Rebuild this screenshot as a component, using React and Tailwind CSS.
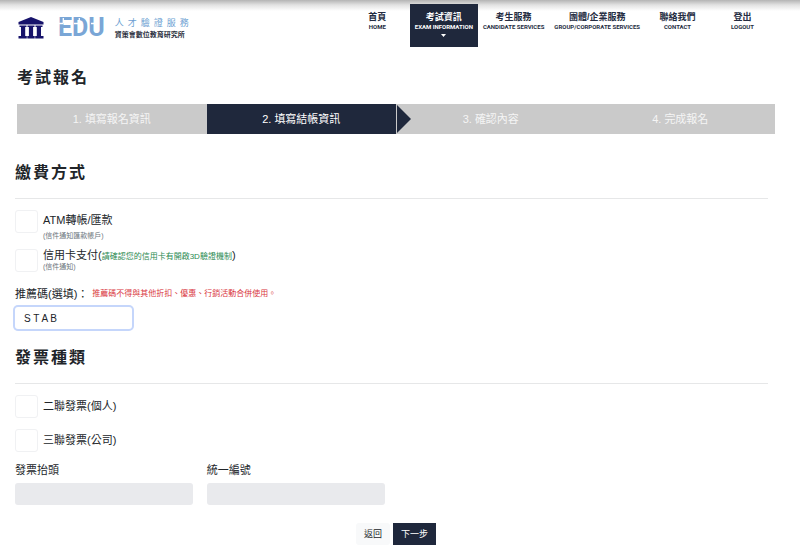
import React, { useState } from 'react';

const navItems = [
  { title: '首頁', sub: 'HOME' },
  { title: '考試資訊', sub: 'EXAM INFORMATION', active: true },
  { title: '考生服務', sub: 'CANDIDATE SERVICES' },
  { title: '團體/企業服務', sub: 'GROUP/CORPORATE SERVICES' },
  { title: '聯絡我們', sub: 'CONTACT' },
  { title: '登出', sub: 'LOGOUT' },
];

const steps = ['填寫報名資訊', '填寫結帳資訊', '確認內容', '完成報名'];
const currentStep = 1;

const radioClass =
  'size-[23px] shrink-0 appearance-none rounded-[3px] border border-[#f0f1f3] bg-white checked:border-[#1f283c] checked:bg-[#1f283c]';

const Logo = () => (
  <a href="#" className="flex items-center pt-3 pl-[18px]">
    {/* Institute mark: pediment on three columns */}
    <svg width="26" height="22" viewBox="0 0 26 22" fill="#17136b" aria-hidden="true">
      <path d="M13 0 25.5 5v2.500H.5V5z" />
      <path d="M1.500 8.500h7v1.500H7.200v9h1.600v2.500H.5V19H3v-9H1.500zM9.500 8.500h7v1.500h-1.400v9h1.600v2.500H9.300V19h1.600v-9H9.500zM17.500 8.500h7v1.500H23v9h2.500v2.500h-8.300V19h1.600v-9h-1.300z" />
    </svg>
    <span className="relative ml-[14px] font-['Roboto',sans-serif] text-[25px] leading-6 font-bold text-[#7aa6d6]">
      EDU
      {/* cuts that leave a dot at the top left of every letter */}
      <svg className="absolute inset-0" width="48" height="24" viewBox="0 0 48 24" aria-hidden="true">
        <path d="M0 7.500h5M16 7.500h5M33 7.500h5" stroke="#fff" strokeWidth="1.300" />
        <path d="M5.300 2v5.500M21.300 2v5.500" stroke="#fff" strokeWidth="1.300" />
      </svg>
    </span>
    <span className="ml-[10px] flex flex-col">
      <span className="text-[9px] leading-3 tracking-[4px] text-[#6d9fd2]">人才驗證服務</span>
      <span className="text-[7px] leading-[11px] font-bold text-[#2b3040]">資策會數位教育研究所</span>
    </span>
  </a>
);

const Header = () => (
  <header className="flex items-start justify-between bg-[linear-gradient(to_bottom,#b4b4b4_0px,#e2e2e2_5px,#fff_11px)] pt-1 pr-[25px]">
    <Logo />
    <nav className="flex text-center">
      {navItems.map((item) => (
        <a
          key={item.sub}
          href="#"
          className={`flex h-[43px] min-w-[65px] flex-col items-center px-[5px] pt-[7px] font-bold whitespace-nowrap ${
            item.active ? 'bg-[#1f283c] text-white' : 'text-[#252d42]'
          }`}
        >
          <span className="text-[9px] leading-3">{item.title}</span>
          <span className="font-['Roboto',sans-serif] text-[6px] leading-[7px]">{item.sub}</span>
          {item.active && (
            <svg className="mt-1" width="5" height="3" viewBox="0 0 5 3" fill="#fff" aria-hidden="true">
              <path d="M0 0h5L2.500 3z" />
            </svg>
          )}
        </a>
      ))}
    </nav>
  </header>
);

const Steps = () => (
  <ol className="mt-[14px] mr-[25px] ml-[17px] grid grid-cols-4 bg-[#cacaca] text-center text-[11px] leading-[30px] text-[#f5f5f5]">
    {steps.map((step, index) => (
      <li key={step} className={index === currentStep ? 'relative bg-[#1f283c] text-white' : ''}>
        {index + 1}. {step}
        {index === currentStep && (
          <svg className="absolute top-0 left-full" width="15" height="30" viewBox="0 0 15 30" aria-hidden="true">
            <path d="M0 0v30L15 15z" fill="#1f283c" />
            <path d="M.5 0v30" stroke="#cacaca" />
          </svg>
        )}
      </li>
    ))}
  </ol>
);

const SectionTitle = ({ children }) => (
  <h2 className="border-b border-[#e6e7e8] pb-[13px] text-base leading-6 font-bold tracking-[2px]">{children}</h2>
);

const App = () => {
  const [payment, setPayment] = useState('');
  const [invoice, setInvoice] = useState('');
  const [code, setCode] = useState('S T A B');

  return (
    <div
      lang="zh-Hant"
      className="min-h-screen bg-white pb-[10px] font-['Liberation_Sans','Noto_Sans_CJK_TC',sans-serif] text-[11px] text-[#212529]"
    >
      <Header />

      <main>
        <h1 className="mt-[19px] ml-[17px] text-base leading-6 font-bold tracking-[2px]">考試報名</h1>
        <Steps />

        <form onSubmit={(e) => e.preventDefault()}>
          {/* Payment */}
          <section className="mt-[27px] mr-8 ml-[15px]">
            <SectionTitle>繳費方式</SectionTitle>

            <div className="mt-[11px] flex gap-[5px]">
              <input
                id="atm"
                type="radio"
                name="payment"
                className={radioClass}
                checked={payment === 'atm'}
                onChange={() => setPayment('atm')}
              />
              <label htmlFor="atm">
                <span className="block leading-5">ATM轉帳/匯款</span>
                <span className="block text-[7px] leading-3 text-[#6c757d]">(信件通知匯款帳戶)</span>
              </label>
            </div>

            <div className="mt-[7px] flex gap-[5px]">
              <input
                id="card"
                type="radio"
                name="payment"
                className={radioClass}
                checked={payment === 'card'}
                onChange={() => setPayment('card')}
              />
              <label htmlFor="card">
                <span className="block leading-3">
                  信用卡支付(
                  <span className="text-[8px] leading-none text-[#2b8a52]">請確認您的信用卡有開啟3D驗證機制</span>)
                </span>
                <span className="block text-[7px] leading-[11px] text-[#6c757d]">(信件通知)</span>
              </label>
            </div>

            <div className="mt-3 flex items-center gap-1 leading-5">
              <label htmlFor="code">推薦碼(選填)：</label>
              <span className="text-[8px] text-[#d9363e]">推薦碼不得與其他折扣、優惠、行銷活動合併使用。</span>
            </div>
            <input
              id="code"
              type="text"
              value={code}
              onChange={(e) => setCode(e.target.value)}
              className="mt-[3px] block h-[22px] w-[117px] rounded-[3px] bg-white px-[9px] text-[10px] ring-2 ring-[#c5d6fb] outline-none"
            />
          </section>

          {/* Invoice */}
          <section className="mt-[17px] mr-8 ml-[15px]">
            <SectionTitle>發票種類</SectionTitle>

            <div className="mt-[11px] flex gap-[5px]">
              <input
                id="personal"
                type="radio"
                name="invoice"
                className={radioClass}
                checked={invoice === 'personal'}
                onChange={() => setInvoice('personal')}
              />
              <label htmlFor="personal" className="leading-[22px]">二聯發票(個人)</label>
            </div>
            <div className="mt-[11px] flex gap-[5px]">
              <input
                id="company"
                type="radio"
                name="invoice"
                className={radioClass}
                checked={invoice === 'company'}
                onChange={() => setInvoice('company')}
              />
              <label htmlFor="company" className="leading-[22px]">三聯發票(公司)</label>
            </div>

            <div className="mt-2 grid grid-cols-4 gap-[14px]">
              <div>
                <label htmlFor="title" className="block leading-5">發票抬頭</label>
                <input
                  id="title"
                  type="text"
                  disabled={invoice !== 'company'}
                  className="mt-[3px] block h-[22px] w-full rounded-[3px] bg-[#e9eaed] px-2"
                />
              </div>
              <div>
                <label htmlFor="taxId" className="block leading-5">統一編號</label>
                <input
                  id="taxId"
                  type="text"
                  disabled={invoice !== 'company'}
                  className="mt-[3px] block h-[22px] w-full rounded-[3px] bg-[#e9eaed] px-2"
                />
              </div>
            </div>
          </section>

          <div className="mt-[18px] mr-[25px] ml-[17px] flex justify-center gap-[3px] text-[9px] leading-[22px]">
            <button type="button" className="rounded-[3px] bg-[#f8f9fa] px-2">返回</button>
            <button type="submit" className="bg-[#1f283c] px-2 text-white">下一步</button>
          </div>
        </form>
      </main>
    </div>
  );
};

export default App;
